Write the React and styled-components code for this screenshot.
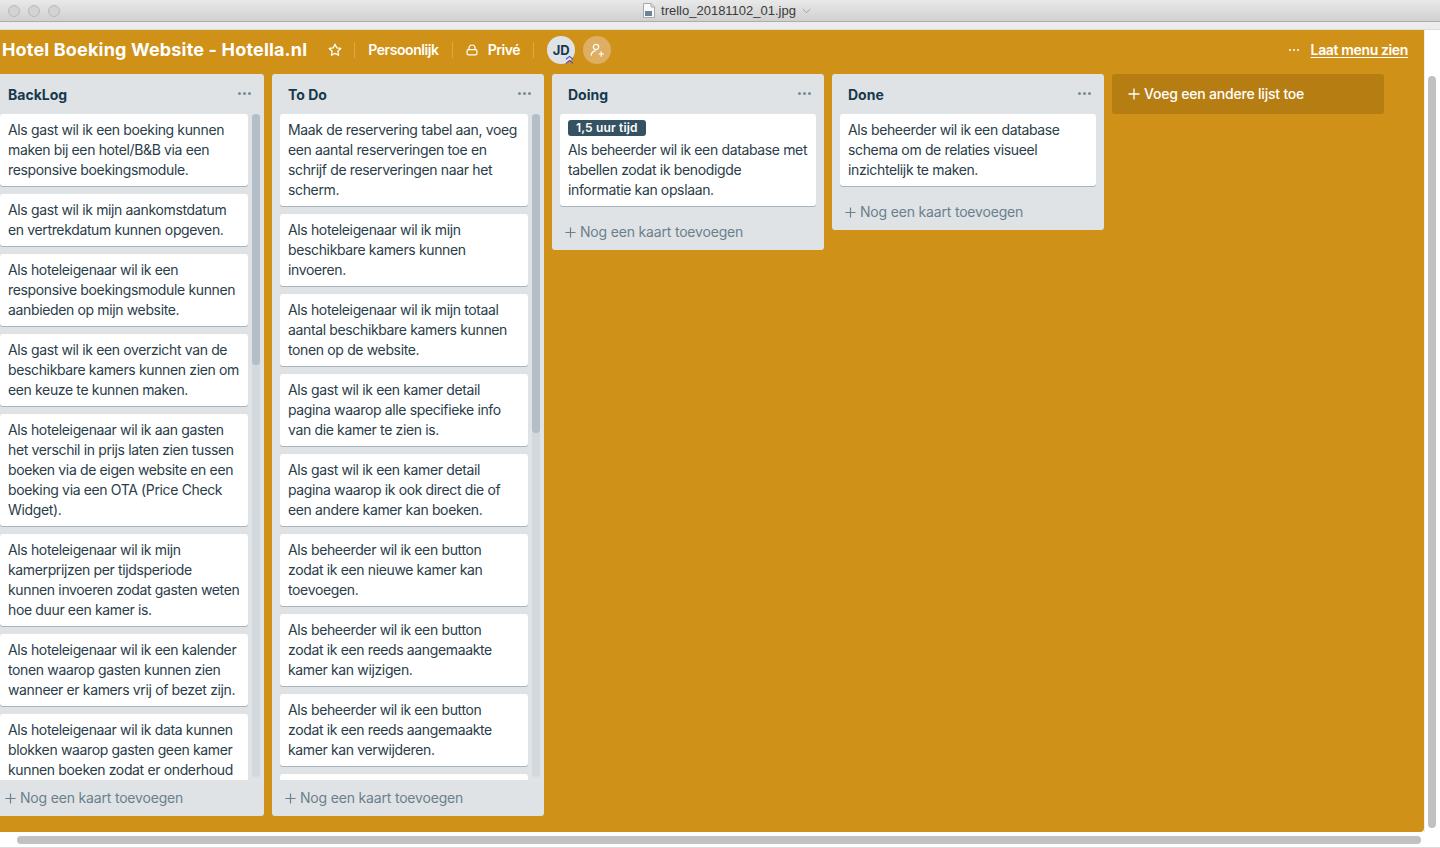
import React from 'react';
import styled, {createGlobalStyle} from 'styled-components';

const GlobalStyle = createGlobalStyle`
	html, body {
		margin: 0;
		padding: 0;
		height: 100%;
		overflow: hidden;
		background: #fff;
	}
	body {
		font-family: Inter, "Noto Sans", sans-serif;
		font-size: 14px;
		line-height: 20px;
		color: #17394d;
	}
`;

const Page = styled.div`
	display: flex;
	flex-direction: column;
	width: 1440px;
	height: 848px;
	overflow: hidden;
`;

const TitleBar = styled.div`
	box-sizing: border-box;
	display: flex;
	align-items: center;
	height: 22px;
	flex: none;
	background: linear-gradient(#e9e9e9, #d0d0d0);
	border-bottom: 1px solid #adadad;
`;

const Lights = styled.div`
	display: flex;
	gap: 8px;
	padding-left: 8px;
	width: 60px;
	flex: none;
`;

const Light = styled.span`
	box-sizing: border-box;
	width: 12px;
	height: 12px;
	border-radius: 50%;
	background: #d3d3d3;
	border: 1px solid #b9b9b9;
`;

const FileName = styled.div`
	flex: 1;
	display: flex;
	align-items: center;
	justify-content: center;
	gap: 6px;
	padding-right: 54px;
	font-family: "Liberation Sans", Arial, sans-serif;
	font-size: 13px;
	line-height: 16px;
	color: #3b3b3b;
`;

const Strip = styled.div`
	box-sizing: border-box;
	flex: none;
	height: 8px;
	background: #ececec;
	border-bottom: 1px solid #dcdcdc;
`;

const Middle = styled.div`
	flex: 1;
	display: flex;
	min-height: 0;
`;

const Board = styled.div`
	flex: 1;
	min-width: 0;
	display: flex;
	flex-direction: column;
	background: #cf9118;
	border-bottom-right-radius: 4px;
	overflow: hidden;
`;

const BoardHeader = styled.div`
	box-sizing: border-box;
	flex: none;
	height: 44px;
	display: flex;
	align-items: center;
	padding: 0 16px 4px 2px;
	color: #fff;
`;

const BoardTitle = styled.div`
	font-size: 18px;
	font-weight: 700;
	line-height: 24px;
	letter-spacing: 0.17px;
	white-space: nowrap;
`;

const HeaderIcon = styled.span`
	display: flex;
	align-items: center;
	margin-left: ${props => props.left}px;
`;

const Divider = styled.span`
	width: 1px;
	height: 16px;
	background: rgba(255, 255, 255, 0.22);
	margin: 0 ${props => props.right}px 0 ${props => props.left}px;
`;

const HeaderLabel = styled.span`
	font-weight: 600;
	font-size: 14px;
	letter-spacing: -0.42px;
	white-space: nowrap;
	margin-left: ${props => props.left || 0}px;
`;

const Avatar = styled.span`
	position: relative;
	display: flex;
	align-items: center;
	justify-content: center;
	width: 28px;
	height: 28px;
	border-radius: 50%;
	background: #dfe3e6;
	color: #17394d;
	font-size: 13px;
	font-weight: 700;
`;

const AvatarBadge = styled.svg`
	position: absolute;
	right: 1px;
	bottom: -1px;
`;

const AddMember = styled.span`
	display: flex;
	align-items: center;
	justify-content: center;
	width: 28px;
	height: 28px;
	margin-left: 8px;
	border-radius: 50%;
	background: #deae62;
`;

const MenuLink = styled.div`
	margin-left: auto;
	display: flex;
	align-items: center;
	gap: 12px;
	font-weight: 600;
	letter-spacing: -0.36px;
`;

const MenuDots = styled.span`
	display: flex;
	gap: 2px;
	& > i {
		width: 2px;
		height: 2px;
		background: #fff;
		border-radius: 50%;
	}
`;

const MenuText = styled.span`
	text-decoration: underline;
	text-underline-offset: 2px;
`;

const Lists = styled.div`
	display: flex;
	align-items: flex-start;
	gap: 8px;
	margin-left: -8px;
`;

const List = styled.div`
	box-sizing: border-box;
	flex: none;
	width: 272px;
	${props => (props.tall ? 'height: 742px;' : '')}
	display: flex;
	flex-direction: column;
	background: #dfe3e6;
	border-radius: 3px;
`;

const ListHeader = styled.div`
	flex: none;
	height: 40px;
	display: flex;
	align-items: center;
	justify-content: space-between;
	padding: 2px 20px 0 16px;
	box-sizing: border-box;
`;

const ListTitle = styled.div`
	font-weight: 700;
	font-size: 14px;
	color: #17394d;
`;

const ListDots = styled.span`
	display: flex;
	gap: 2px;
	margin: -3px -7px 0 0;
	& > i {
		width: 3px;
		height: 3px;
		border-radius: 50%;
		background: #798d99;
	}
`;

const ListBody = styled.div`
	flex: ${props => (props.tall ? '1' : 'none')};
	min-height: 0;
	display: flex;
	padding-left: 8px;
`;

const Cards = styled.div`
	flex: 1;
	min-width: 0;
	display: flex;
	flex-direction: column;
	gap: 8px;
	overflow: hidden;
	${props => (props.tall ? 'margin-right: 4px;' : 'margin-right: 8px; padding-bottom: 8px;')}
`;

const Card = styled.div`
	flex: none;
	box-sizing: border-box;
	padding: 6px 8px;
	background: #fff;
	border-radius: 3px;
	box-shadow: 0 1px 0 rgba(9, 45, 66, 0.25);
	color: #2b3d49;
	font-size: 14px;
	line-height: 20px;
	letter-spacing: -0.36px;
	white-space: pre-line;
	&:empty {
		height: 32px;
	}
`;

const Label = styled.div`
	width: fit-content;
	height: 16px;
	padding: 0 8px;
	margin-bottom: 4px;
	border-radius: 3px;
	background: #355263;
	color: #fff;
	font-size: 12px;
	font-weight: 600;
	line-height: 16px;
	letter-spacing: 0.15px;
`;

const Track = styled.div`
	flex: none;
	width: 8px;
	margin: 0 4px 3px 0;
	background: #d3d8dc;
	border-radius: 4px;
`;

const Thumb = styled.div`
	width: 8px;
	background: #b4bec6;
	border-radius: 4px;
`;

const ListFooter = styled.div`
	flex: none;
	height: 36px;
	display: flex;
	align-items: center;
	gap: 4px;
	padding-left: 13px;
	color: #6b808c;
	font-size: 14px;
	letter-spacing: -0.18px;
`;

const AddList = styled.div`
	box-sizing: border-box;
	flex: none;
	width: 272px;
	height: 40px;
	display: flex;
	align-items: center;
	gap: 4px;
	padding-left: 16px;
	background: #b67d13;
	border-radius: 3px;
	color: #fff;
	font-weight: 500;
	letter-spacing: -0.2px;
`;

const VGutter = styled.div`
	flex: none;
	width: 16px;
	padding: 46px 4px 4px;
	box-sizing: border-box;
	background: #fff;
	border-left: 1px solid #eee;
`;

const VThumb = styled.div`
	width: 8px;
	height: 100%;
	margin-left: -1px;
	background: #c1c1c1;
	border-radius: 4px;
`;

const HGutter = styled.div`
	flex: none;
	height: 16px;
	box-sizing: border-box;
	padding: 4px 19px 3px 17px;
	background: #fff;
	border-bottom: 1px solid #dcdcdc;
`;

const HThumb = styled.div`
	height: 8px;
	background: #c1c1c1;
	border-radius: 4px;
`;

const backlog = [
	'Als gast wil ik een boeking kunnen maken bij een hotel/B&B via een responsive boekingsmodule.',
	'Als gast wil ik mijn aankomstdatum en vertrekdatum kunnen opgeven.',
	'Als hoteleigenaar wil ik een responsive boekingsmodule kunnen aanbieden op mijn website.',
	'Als gast wil ik een overzicht van de beschikbare kamers kunnen zien om een keuze te kunnen maken.',
	'Als hoteleigenaar wil ik aan gasten het verschil in prijs laten zien tussen boeken via de eigen website en een boeking via een OTA (Price Check Widget).',
	'Als hoteleigenaar wil ik mijn kamerprijzen per tijdsperiode kunnen invoeren zodat gasten weten hoe duur een kamer is.',
	'Als hoteleigenaar wil ik een kalender tonen waarop gasten kunnen zien wanneer er kamers vrij of bezet zijn.',
	'Als hoteleigenaar wil ik data kunnen blokken waarop gasten geen kamer kunnen boeken zodat er onderhoud',
];

// the \n keep the line breaks of the reference, Inter runs a bit narrower here
const todo = [
	'Maak de reservering tabel aan, voeg een aantal reserveringen toe en schrijf de reserveringen naar het scherm.',
	'Als hoteleigenaar wil ik mijn beschikbare kamers kunnen invoeren.',
	'Als hoteleigenaar wil ik mijn totaal aantal beschikbare kamers kunnen tonen op de website.',
	'Als gast wil ik een kamer detail pagina waarop alle specifieke info van die kamer te zien is.',
	'Als gast wil ik een kamer detail pagina waarop ik ook direct die of een andere kamer kan boeken.',
	'Als beheerder wil ik een button\nzodat ik een nieuwe kamer kan toevoegen.',
	'Als beheerder wil ik een button\nzodat ik een reeds aangemaakte kamer kan wijzigen.',
	'Als beheerder wil ik een button\nzodat ik een reeds aangemaakte kamer kan verwijderen.',
	'',
];

const lists = [
	{title: 'BackLog', cards: backlog, thumb: 251},
	{title: 'To Do', cards: todo, thumb: 319},
	{title: 'Doing', cards: ['Als beheerder wil ik een database met tabellen zodat ik benodigde\ninformatie kan opslaan.'], label: '1,5 uur tijd'},
	{title: 'Done', cards: ['Als beheerder wil ik een database schema om de relaties visueel inzichtelijk te maken.']},
];

const Plus = ({color, size}) => (
	<svg width={size} height={size} viewBox="0 0 12 12" fill="none" stroke={color} strokeWidth="1.3">
		<path d="M6 .5v11M.5 6h11" />
	</svg>
);

const StarIcon = () => (
	<svg width="14" height="14" viewBox="0 0 14 14" fill="none" stroke="#fff" strokeWidth="1.3" strokeLinejoin="round">
		<path d="M7 1.2l1.75 3.7 4 .55-2.9 2.8.7 4L7 10.35 3.45 12.25l.7-4-2.9-2.8 4-.55z" />
	</svg>
);

const LockIcon = () => (
	<svg width="12" height="12" viewBox="0 0 12 12" fill="none" stroke="#fff" strokeWidth="1.2">
		<rect x="1.1" y="5.6" width="9.8" height="5.3" rx="1.2" />
		<path d="M3 5.6V4a3 3 0 0 1 6 0v1.6" />
	</svg>
);

const UserPlusIcon = () => (
	<svg width="14" height="14" viewBox="0 0 14 14" fill="none" stroke="#fff" strokeWidth="1.2" strokeLinecap="round">
		<circle cx="6" cy="4" r="2.7" />
		<path d="M1.2 12.2c.4-2.6 2-4.1 4-4.4M9 11h4.4M11.2 8.8v4.4" />
	</svg>
);

const ChevronsBadge = () => (
	<AvatarBadge width="9" height="10" viewBox="0 0 9 10" fill="none" stroke="#4a55c8" strokeWidth="1.2">
		<path d="M1 4.2L4.5 1.4 8 4.2M1 8.4L4.5 5.6 8 8.4" />
	</AvatarBadge>
);

const FileIcon = () => (
	<svg width="12" height="15" viewBox="0 0 12 15">
		<path d="M.5.5h7.5l3.5 3.5v10.5H.5z" fill="#f8f8f8" stroke="#a8a8a8" />
		<path d="M8 .5V4h3.5" fill="none" stroke="#a8a8a8" />
		<rect x="2" y="8" width="7" height="5" fill="#6f8398" />
	</svg>
);

const Chevron = () => (
	<svg width="9" height="6" viewBox="0 0 9 6" fill="none" stroke="#a2a2a2">
		<path d="M.7 1l3.8 3.6L8.3 1" />
	</svg>
);

const BoardList = ({title, cards, thumb, label}) => (
	<List tall={Boolean(thumb)}>
		<ListHeader>
			<ListTitle>{title}</ListTitle>
			<ListDots><i /><i /><i /></ListDots>
		</ListHeader>
		<ListBody tall={Boolean(thumb)}>
			<Cards tall={Boolean(thumb)}>
				{cards.map(text => (
					<Card key={text}>
						{label && <Label>{label}</Label>}
						{text}
					</Card>
				))}
			</Cards>
			{thumb && (
				<Track>
					<Thumb style={{height: thumb}} />
				</Track>
			)}
		</ListBody>
		<ListFooter>
			<Plus color="#6b808c" size={11} />
			Nog een kaart toevoegen
		</ListFooter>
	</List>
);

const App = () => (
	<Page>
		<GlobalStyle />
		<TitleBar>
			<Lights><Light /><Light /><Light /></Lights>
			<FileName>
				<FileIcon />
				trello_20181102_01.jpg
				<Chevron />
			</FileName>
		</TitleBar>
		<Strip />
		<Middle>
			<Board>
				<BoardHeader>
					<BoardTitle>Hotel Boeking Website - Hotella.nl</BoardTitle>
					<HeaderIcon left={21}><StarIcon /></HeaderIcon>
					<Divider left={12} right={13} />
					<HeaderLabel>Persoonlijk</HeaderLabel>
					<Divider left={13} right={13} />
					<HeaderIcon left={0}><LockIcon /></HeaderIcon>
					<HeaderLabel left={10}>Privé</HeaderLabel>
					<Divider left={13} right={13} />
					<Avatar>JD<ChevronsBadge /></Avatar>
					<AddMember><UserPlusIcon /></AddMember>
					<MenuLink>
						<MenuDots><i /><i /><i /></MenuDots>
						<MenuText>Laat menu zien</MenuText>
					</MenuLink>
				</BoardHeader>
				<Lists>
					{lists.map(list => <BoardList key={list.title} {...list} />)}
					<AddList>
						<Plus color="#fff" size={12} />
						Voeg een andere lijst toe
					</AddList>
				</Lists>
			</Board>
			<VGutter><VThumb /></VGutter>
		</Middle>
		<HGutter><HThumb /></HGutter>
	</Page>
);

export default App;
